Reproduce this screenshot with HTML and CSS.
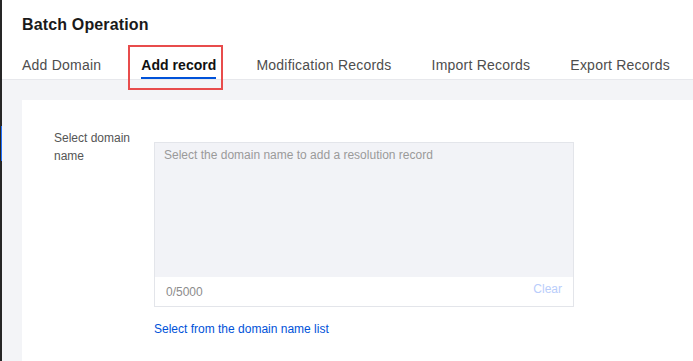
FILE: index.html
```html
<!DOCTYPE html>
<html>

<head>
	<title>Batch Operation</title>
	<link rel="stylesheet" href="styles.css">
</head>

<body>
	<div class="layout">
		<!-- Mép thanh bên -->
		<div class="side-strip">
			<div class="side-active"></div>
		</div>

		<div class="main">
			<div class="page-header">
				<h1>Batch Operation</h1>
				<div class="tabs">
					<div class="tab">Add Domain</div>
					<div class="tab active">Add record</div>
					<div class="tab">Modification Records</div>
					<div class="tab">Import Records</div>
					<div class="tab">Export Records</div>
				</div>
			</div>

			<div class="content">
				<div class="card">
					<div class="form-row">
						<label class="form-label" for="domainInput">Select domain name</label>
						<div class="form-control">
							<div class="textarea-box">
								<textarea id="domainInput" placeholder="Select the domain name to add a resolution record"></textarea>
								<div class="textarea-footer">
									<span class="counter">0/5000</span>
									<span class="clear-btn">Clear</span>
								</div>
							</div>
							<a class="link" href="#">Select from the domain name list</a>
						</div>
					</div>
				</div>
			</div>
		</div>
	</div>
</body>

</html>
```

FILE: styles.css
```css
body {
	margin: 0;
	font-family: "Liberation Sans", Arial, sans-serif;
	background-color: #f3f4f7;
	color: #333;
}

.layout {
	display: flex;
	height: 361px;
	overflow: hidden;
}

.side-strip {
	width: 2px;
	flex-shrink: 0;
	background-color: #262626;
}

.side-active {
	margin-top: 126px;
	margin-left: 1px;
	width: 1px;
	height: 35px;
	background-color: #1f6fff;
}

.main {
	flex: 1;
	display: flex;
	flex-direction: column;
	min-width: 0;
}

.page-header {
	background-color: #fff;
	padding: 13px 0 0 20px;
	border-bottom: 1px solid #e7e8ec;
}

h1 {
	margin: 0;
	font-size: 16px;
	line-height: 24px;
	font-weight: bold;
	letter-spacing: 0.15px;
	color: #1a1a1a;
}

.tabs {
	display: flex;
	gap: 40px;
	white-space: nowrap;
}

.tab {
	position: relative;
	padding: 18px 0 2px;
	line-height: 20px;
	font-size: 14px;
	letter-spacing: 0.22px;
	color: #4d4d4d;
	border-bottom: 2px solid transparent;
}

.tab.active {
	color: #111;
	font-weight: bold;
	letter-spacing: 0.05px;
	border-bottom-color: #0052d9;
}

/* khung đỏ đánh dấu tab đang chọn */
.tab.active::before {
	content: "";
	position: absolute;
	left: -13px;
	right: -7px;
	top: 8px;
	bottom: -13px;
	border: 2px solid #e84c4c;
	z-index: 2;
}

.content {
	flex: 1;
	padding: 20px 0 0 20px;
}

.card {
	background-color: #fff;
	height: 100%;
	padding: 29px 0 0 32px;
	box-sizing: border-box;
}

.form-row {
	display: flex;
}

.form-label {
	width: 84px;
	padding-right: 16px;
	font-size: 12px;
	line-height: 18px;
	color: #555;
}

.form-control {
	padding-top: 13px;
}

.textarea-box {
	width: 418px;
	border: 1px solid #e3e5ea;
	background-color: #fff;
}

.textarea-box textarea {
	display: block;
	width: 100%;
	height: 134px;
	box-sizing: border-box;
	margin: 0;
	padding: 4px 9px;
	border: none;
	outline: none;
	resize: none;
	background-color: #f2f3f7;
	font-family: inherit;
	font-size: 12px;
	line-height: 16px;
	color: #333;
}

.textarea-box textarea::placeholder {
	color: #9a9a9a;
}

.textarea-footer {
	display: flex;
	justify-content: space-between;
	height: 29px;
	padding: 0 11px 0 11px;
	font-size: 12px;
}

.counter {
	line-height: 29px;
	color: #8c8c8c;
	padding-top: 1px;
}

.clear-btn {
	line-height: 24px;
	color: #b9cdfb;
}

.link {
	display: block;
	margin-top: 13px;
	font-size: 12px;
	line-height: 18px;
	color: #0052d9;
	text-decoration: none;
}
```
